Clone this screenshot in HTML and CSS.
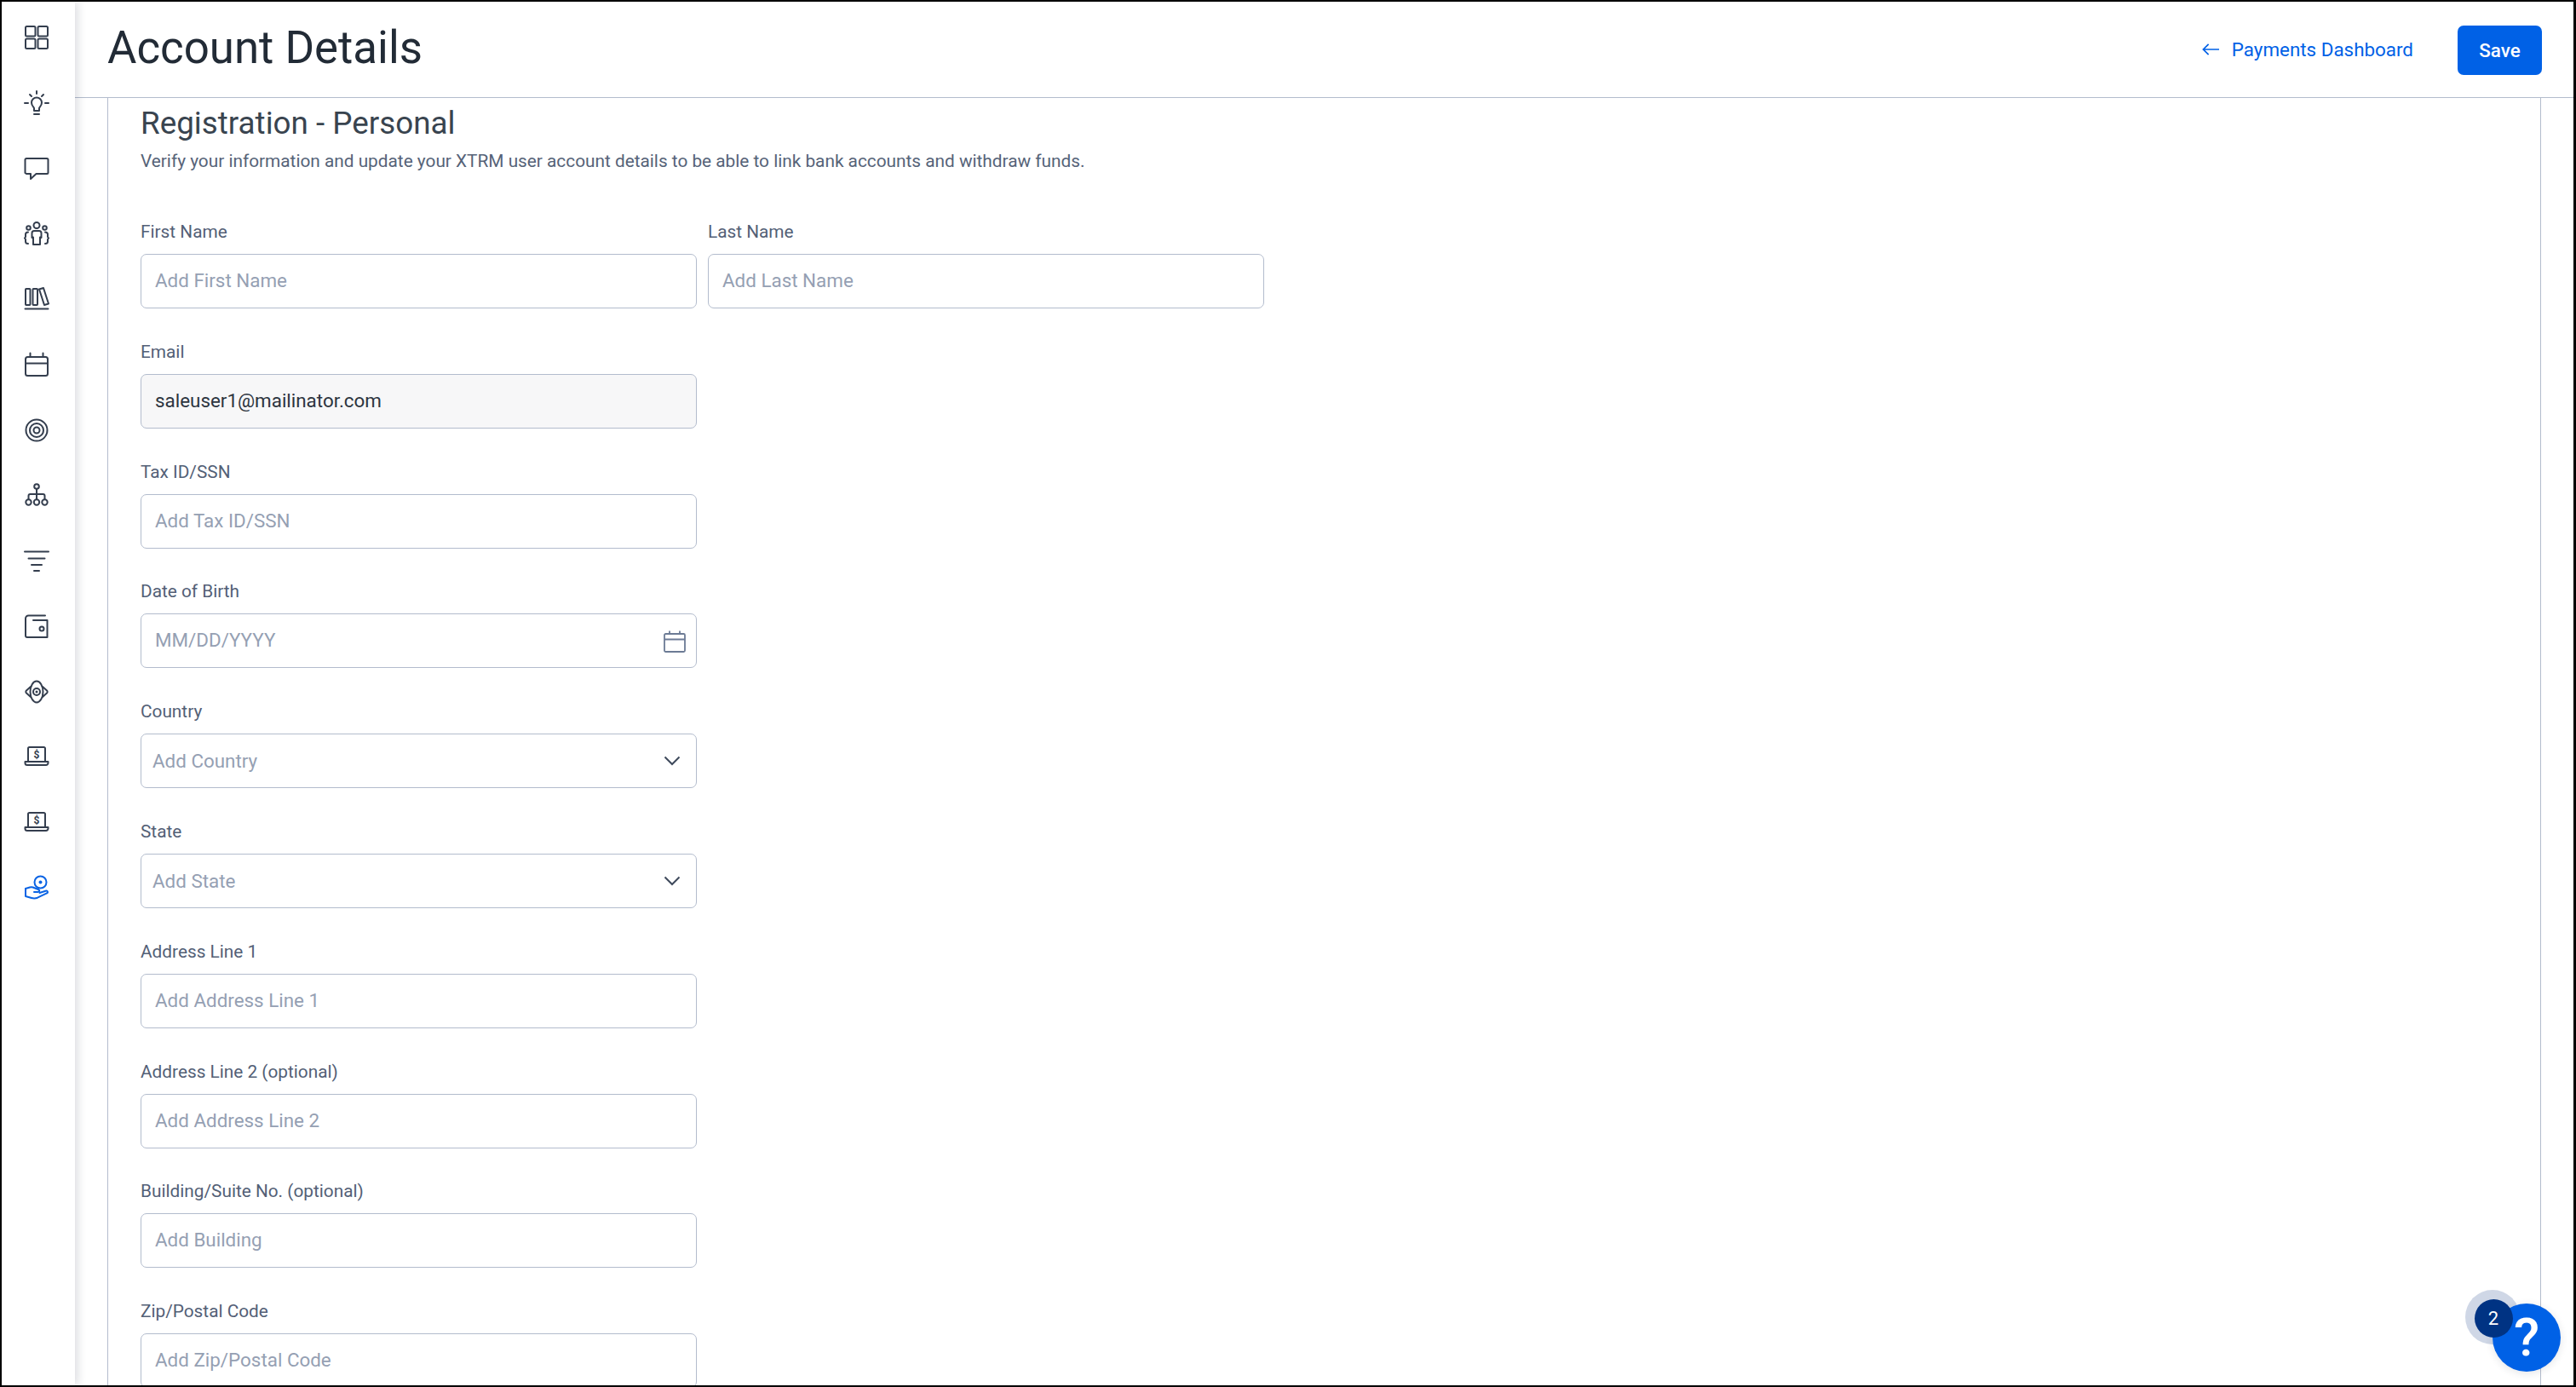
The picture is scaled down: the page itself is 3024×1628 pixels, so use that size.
FILE: index.html
```html
<!DOCTYPE html>
<html lang="en">
<head>
<meta charset="utf-8">
<title>Account Details</title>
<link rel="stylesheet" href="styles.css">
</head>
<body>
<div class="app">
  <nav class="sidebar">
    <svg class="nav-icon" viewBox="0 0 30 30"><rect x="2" y="2" width="11.5" height="11.5" rx="1.5"/><rect x="16.5" y="2" width="11.5" height="11.5" rx="1.5"/><rect x="2" y="16.5" width="11.5" height="11.5" rx="1.5"/><rect x="16.5" y="16.5" width="11.5" height="11.5" rx="1.5"/></svg>
    <svg class="nav-icon" viewBox="0 0 30 30"><path d="M15 1v3M7 5l2 2M23 5l-2 2M1 15h4M25 15h4"/><path d="M12 24v-3c0-1.500-3-2.500-3-6.500a6 6 0 0 1 12 0c0 4-3 5-3 6.500v3z"/><path d="M12 28h6"/></svg>
    <svg class="nav-icon" viewBox="0 0 30 30"><path d="M3 3h24a1.500 1.500 0 0 1 1.500 1.500v15A1.500 1.500 0 0 1 27 21H14.500l-6.500 6v-6H3l-1.500-1V4.500A1.500 1.500 0 0 1 3 3z"/></svg>
    <svg class="nav-icon" viewBox="0 0 30 30"><circle cx="15" cy="5.500" r="3.500"/><circle cx="5.500" cy="8.500" r="2.300"/><circle cx="24.500" cy="8.500" r="2.300"/><path d="M9.500 17v-2.500a2.500 2.500 0 0 1 2.500-2.500h6a2.500 2.500 0 0 1 2.500 2.500V17M9.500 17v3l1.500-.5V28h8v-8.500l1.500.5v-3"/><path d="M5 13.500c-2 0-3 .8-3 2.500v3l-1 1.500L2 22v2.500C2 26 3 27 5 27M25 13.500c2 0 3 .8 3 2.500v3l1 1.500L28 22v2.500C28 26 27 27 25 27"/></svg>
    <svg class="nav-icon" viewBox="0 0 30 30"><rect x="2" y="3" width="5.500" height="19" rx=".8"/><rect x="10.500" y="3" width="5.500" height="19" rx=".8"/><path d="M18 3.500l5-1.500 6 18.500-5 1.500z"/><path d="M1.500 26.500h27"/></svg>
    <svg class="nav-icon" viewBox="0 0 30 30"><rect x="2" y="6" width="26" height="22" rx="2.500"/><path d="M2 13.500h26M7.500 1.500V6M22.500 1.500V6"/></svg>
    <svg class="nav-icon" viewBox="0 0 30 30"><circle cx="15" cy="15" r="12.500"/><circle cx="15" cy="15" r="8"/><circle cx="15" cy="15" r="3.500"/></svg>
    <svg class="nav-icon" viewBox="0 0 30 30"><circle cx="15" cy="5" r="2.800"/><path d="M15 8v5.500M5.500 20v-4a2 2 0 0 1 2-2h15a2 2 0 0 1 2 2v4M15 13.500V20"/><circle cx="5.500" cy="23.500" r="3.200"/><circle cx="15" cy="23.500" r="3.200"/><circle cx="24.500" cy="23.500" r="3.200"/></svg>
    <svg class="nav-icon" viewBox="0 0 30 30"><path d="M1 4.500h28M5.500 12.500h19M9 20h12M12 27h6"/></svg>
    <svg class="nav-icon" viewBox="0 0 30 30"><path d="M25 2.500H5.500A3.500 3.500 0 0 0 2 6v20a2 2 0 0 0 2 2h23.500V8H11"/><circle cx="21" cy="18" r="2.500"/></svg>
    <svg class="nav-icon" viewBox="0 0 30 30"><ellipse cx="15" cy="15" rx="7.500" ry="12.500"/><circle cx="15" cy="15" r="4"/><circle class="dot-dark" cx="15" cy="15" r="1.500"/><path d="M8 9L3 13.500a2 2 0 0 0 0 3L8 21M22 9l5 4.500a2 2 0 0 1 0 3L22 21"/></svg>
    <svg class="nav-icon" viewBox="0 0 30 30"><path d="M5 21V5.500a1.500 1.500 0 0 1 1.500-1.500h17A1.500 1.500 0 0 1 25 5.500V21"/><path d="M1.500 21h27v1.500a2.500 2.500 0 0 1-2.500 2.500H4a2.500 2.500 0 0 1-2.500-2.500z"/><text class="nav-dollar" x="15" y="17">$</text></svg>
    <svg class="nav-icon" viewBox="0 0 30 30"><path d="M5 21V5.500a1.500 1.500 0 0 1 1.500-1.500h17A1.500 1.500 0 0 1 25 5.500V21"/><path d="M1.500 21h27v1.500a2.500 2.500 0 0 1-2.500 2.500H4a2.500 2.500 0 0 1-2.500-2.500z"/><text class="nav-dollar" x="15" y="17">$</text></svg>
    <svg class="nav-icon nav-icon-active" viewBox="0 0 30 30"><circle cx="19.500" cy="8.500" r="7"/><circle class="dot" cx="19.500" cy="8.500" r="2"/><path d="M2 16v9l7 2c3 .8 5 .5 7-.3l10.500-5c2.500-1.200 1.500-3.700-1-3l-7 2.300"/><path d="M2 16l5-1.500c2-.5 3.500-.3 5 .5l5 2c2 .8 1.500 3-.5 3H12"/></svg>
  </nav>

  <div class="main">
    <header class="topbar">
      <h1 class="page-title">Account Details</h1>
      <div class="topbar-actions">
        <a class="back-link" href="#">
          <svg class="back-arrow" viewBox="0 0 22 16"><path d="M21 8H1.500M8 1.500L1.500 8 8 14.500"/></svg>
          <span>Payments Dashboard</span>
        </a>
        <button class="btn-save" type="button">Save</button>
      </div>
    </header>

    <div class="content">
      <section class="card">
        <h2 class="section-title">Registration - Personal</h2>
        <p class="section-desc">Verify your information and update your XTRM user account details to be able to link bank accounts and withdraw funds.</p>

        <form class="form">
          <div class="form-row">
            <div class="field">
              <label class="field-label">First Name</label>
              <div class="field-box"><span class="placeholder">Add First Name</span></div>
            </div>
            <div class="field">
              <label class="field-label">Last Name</label>
              <div class="field-box"><span class="placeholder">Add Last Name</span></div>
            </div>
          </div>
          <div class="field">
            <label class="field-label">Email</label>
            <div class="field-box field-box-disabled"><span class="value">saleuser1@mailinator.com</span></div>
          </div>
          <div class="field">
            <label class="field-label">Tax ID/SSN</label>
            <div class="field-box"><span class="placeholder">Add Tax ID/SSN</span></div>
          </div>
          <div class="field">
            <label class="field-label">Date of Birth</label>
            <div class="field-box">
              <span class="placeholder">MM/DD/YYYY</span>
              <svg class="date-icon" viewBox="0 0 26 26"><rect x="1" y="4" width="24" height="21" rx="1.500"/><path d="M1 10.500h24M7 .5V4M19 .5V4"/></svg>
            </div>
          </div>
          <div class="field">
            <label class="field-label">Country</label>
            <div class="field-box field-box-select">
              <span class="placeholder">Add Country</span>
              <svg class="chevron" viewBox="0 0 20 12"><path d="M1.500 1.500L10 10l8.500-8.500"/></svg>
            </div>
          </div>
          <div class="field">
            <label class="field-label">State</label>
            <div class="field-box field-box-select">
              <span class="placeholder">Add State</span>
              <svg class="chevron" viewBox="0 0 20 12"><path d="M1.500 1.500L10 10l8.500-8.500"/></svg>
            </div>
          </div>
          <div class="field">
            <label class="field-label">Address Line 1</label>
            <div class="field-box"><span class="placeholder">Add Address Line 1</span></div>
          </div>
          <div class="field">
            <label class="field-label">Address Line 2 (optional)</label>
            <div class="field-box"><span class="placeholder">Add Address Line 2</span></div>
          </div>
          <div class="field">
            <label class="field-label">Building/Suite No. (optional)</label>
            <div class="field-box"><span class="placeholder">Add Building</span></div>
          </div>
          <div class="field">
            <label class="field-label">Zip/Postal Code</label>
            <div class="field-box"><span class="placeholder">Add Zip/Postal Code</span></div>
          </div>
        </form>
      </section>
    </div>
  </div>

  <div class="help">
    <span class="help-halo"></span>
    <span class="help-button">?</span>
    <span class="help-badge">2</span>
  </div>
</div>
</body>
</html>
```

FILE: styles.css
```css
* { box-sizing: border-box; }

html, body {
  margin: 0;
  height: 100%;
  background: #000;
  overflow: hidden;
}

body {
  font-family: Roboto, "Liberation Sans", sans-serif;
  padding: 2px 3px 2px 2px;
}

.app {
  position: relative;
  display: flex;
  height: 100%;
  background: #fff;
  overflow: hidden;
}

/* Sidebar */
.sidebar {
  flex: 0 0 86px;
  display: flex;
  flex-direction: column;
  align-items: center;
  gap: 46.770px;
  padding-top: 27px;
  padding-right: 4px;
  background: #fff;
  box-shadow: 3px 0 10px rgba(30, 40, 60, 0.16);
  position: relative;
  z-index: 2;
}

.nav-icon {
  width: 30px;
  height: 30px;
  flex: none;
  fill: none;
  stroke: #343e4e;
  stroke-width: 2;
  stroke-linecap: round;
  stroke-linejoin: round;
}

.nav-icon-active { stroke: #0b64e4; }
.nav-icon-active .dot { fill: #0b64e4; stroke: none; }
.nav-icon .dot-dark { fill: #343e4e; stroke: none; }

.nav-dollar {
  font-family: Roboto, sans-serif;
  font-size: 12px;
  font-weight: 700;
  text-anchor: middle;
  fill: #343e4e;
  stroke: none;
}

/* Main */
.main {
  flex: 1;
  min-width: 0;
  display: flex;
  flex-direction: column;
}

.topbar {
  flex: 0 0 113px;
  display: flex;
  align-items: center;
  justify-content: space-between;
  padding: 0 37px 0 38px;
  border-bottom: 1px solid #b3bccd;
}

.page-title {
  margin: 0 0 3px;
  font-size: 52.800px;
  font-weight: 400;
  color: #222b36;
  line-height: 1.2;
}

.topbar-actions {
  display: flex;
  align-items: center;
  gap: 52px;
}

.back-link {
  display: flex;
  align-items: center;
  gap: 14px;
  font-size: 22.400px;
  color: #0061e6;
  text-decoration: none;
}

.back-arrow {
  width: 21px;
  height: 16px;
  fill: none;
  stroke: #0061e6;
  stroke-width: 1.800;
}

.btn-save {
  width: 99px;
  height: 58px;
  margin-top: 1px;
  border: 0;
  border-radius: 7px;
  background: #0061e6;
  color: #fff;
  font-family: inherit;
  font-size: 22.400px;
  font-weight: 500;
}

/* Content */
.content {
  flex: 1;
  min-height: 0;
  padding: 0 38px;
  overflow: hidden;
}

.card {
  height: 100%;
  padding: 6px 38px 0;
  border-left: 1px solid #b3bccd;
  border-right: 1px solid #b3bccd;
}

.section-title {
  margin: 0;
  font-size: 36.800px;
  font-weight: 400;
  line-height: 47px;
  color: #39444f;
}

.section-desc {
  margin: 6px 0 0;
  font-size: 20.800px;
  line-height: 30px;
  color: #566378;
}

.form {
  display: flex;
  flex-direction: column;
  gap: 35.800px;
  margin-top: 53px;
}

.form-row {
  display: flex;
  gap: 13px;
}

.field {
  width: 653px;
  flex: none;
}

.field-label {
  display: block;
  margin-bottom: 11px;
  font-size: 20.800px;
  line-height: 30px;
  color: #536076;
}

.field-box {
  display: flex;
  align-items: center;
  justify-content: space-between;
  height: 64px;
  padding: 0 16px 2px;
  border: 1.500px solid #b3bccd;
  border-radius: 7px;
  background: #fff;
  font-size: 22.400px;
}

.field-box-disabled { background: #f7f7f8; }
.field-box-select { padding: 0 18px 0 13px; }

.placeholder { color: #95a0b3; }
.value { color: #2d3540; }

.date-icon {
  width: 26px;
  height: 26px;
  margin-right: -4px;
  margin-top: 4px;
  fill: none;
  stroke: #6c7b95;
  stroke-width: 1.800;
}

.chevron {
  width: 20px;
  height: 12px;
  fill: none;
  stroke: #3f4a5c;
  stroke-width: 2;
}

/* Help widget */
.help {
  position: absolute;
  right: 0;
  bottom: 0;
  width: 0;
  height: 0;
}

.help-halo {
  position: absolute;
  left: -127px;
  top: -112px;
  width: 64px;
  height: 64px;
  border-radius: 50%;
  background: #cfd7e6;
}

.help-button {
  position: absolute;
  left: -95px;
  top: -96px;
  width: 80px;
  height: 80px;
  border-radius: 50%;
  background: #0061e6;
  color: #fff;
  font-size: 62px;
  font-weight: 500;
  line-height: 80px;
  text-align: center;
  box-shadow: 0 2px 10px rgba(30, 40, 60, 0.12);
}

.help-badge {
  position: absolute;
  left: -116.500px;
  top: -101.500px;
  width: 45px;
  height: 45px;
  border-radius: 50%;
  background: #003383;
  color: #fff;
  font-size: 22px;
  line-height: 45px;
  text-align: center;
}
```
